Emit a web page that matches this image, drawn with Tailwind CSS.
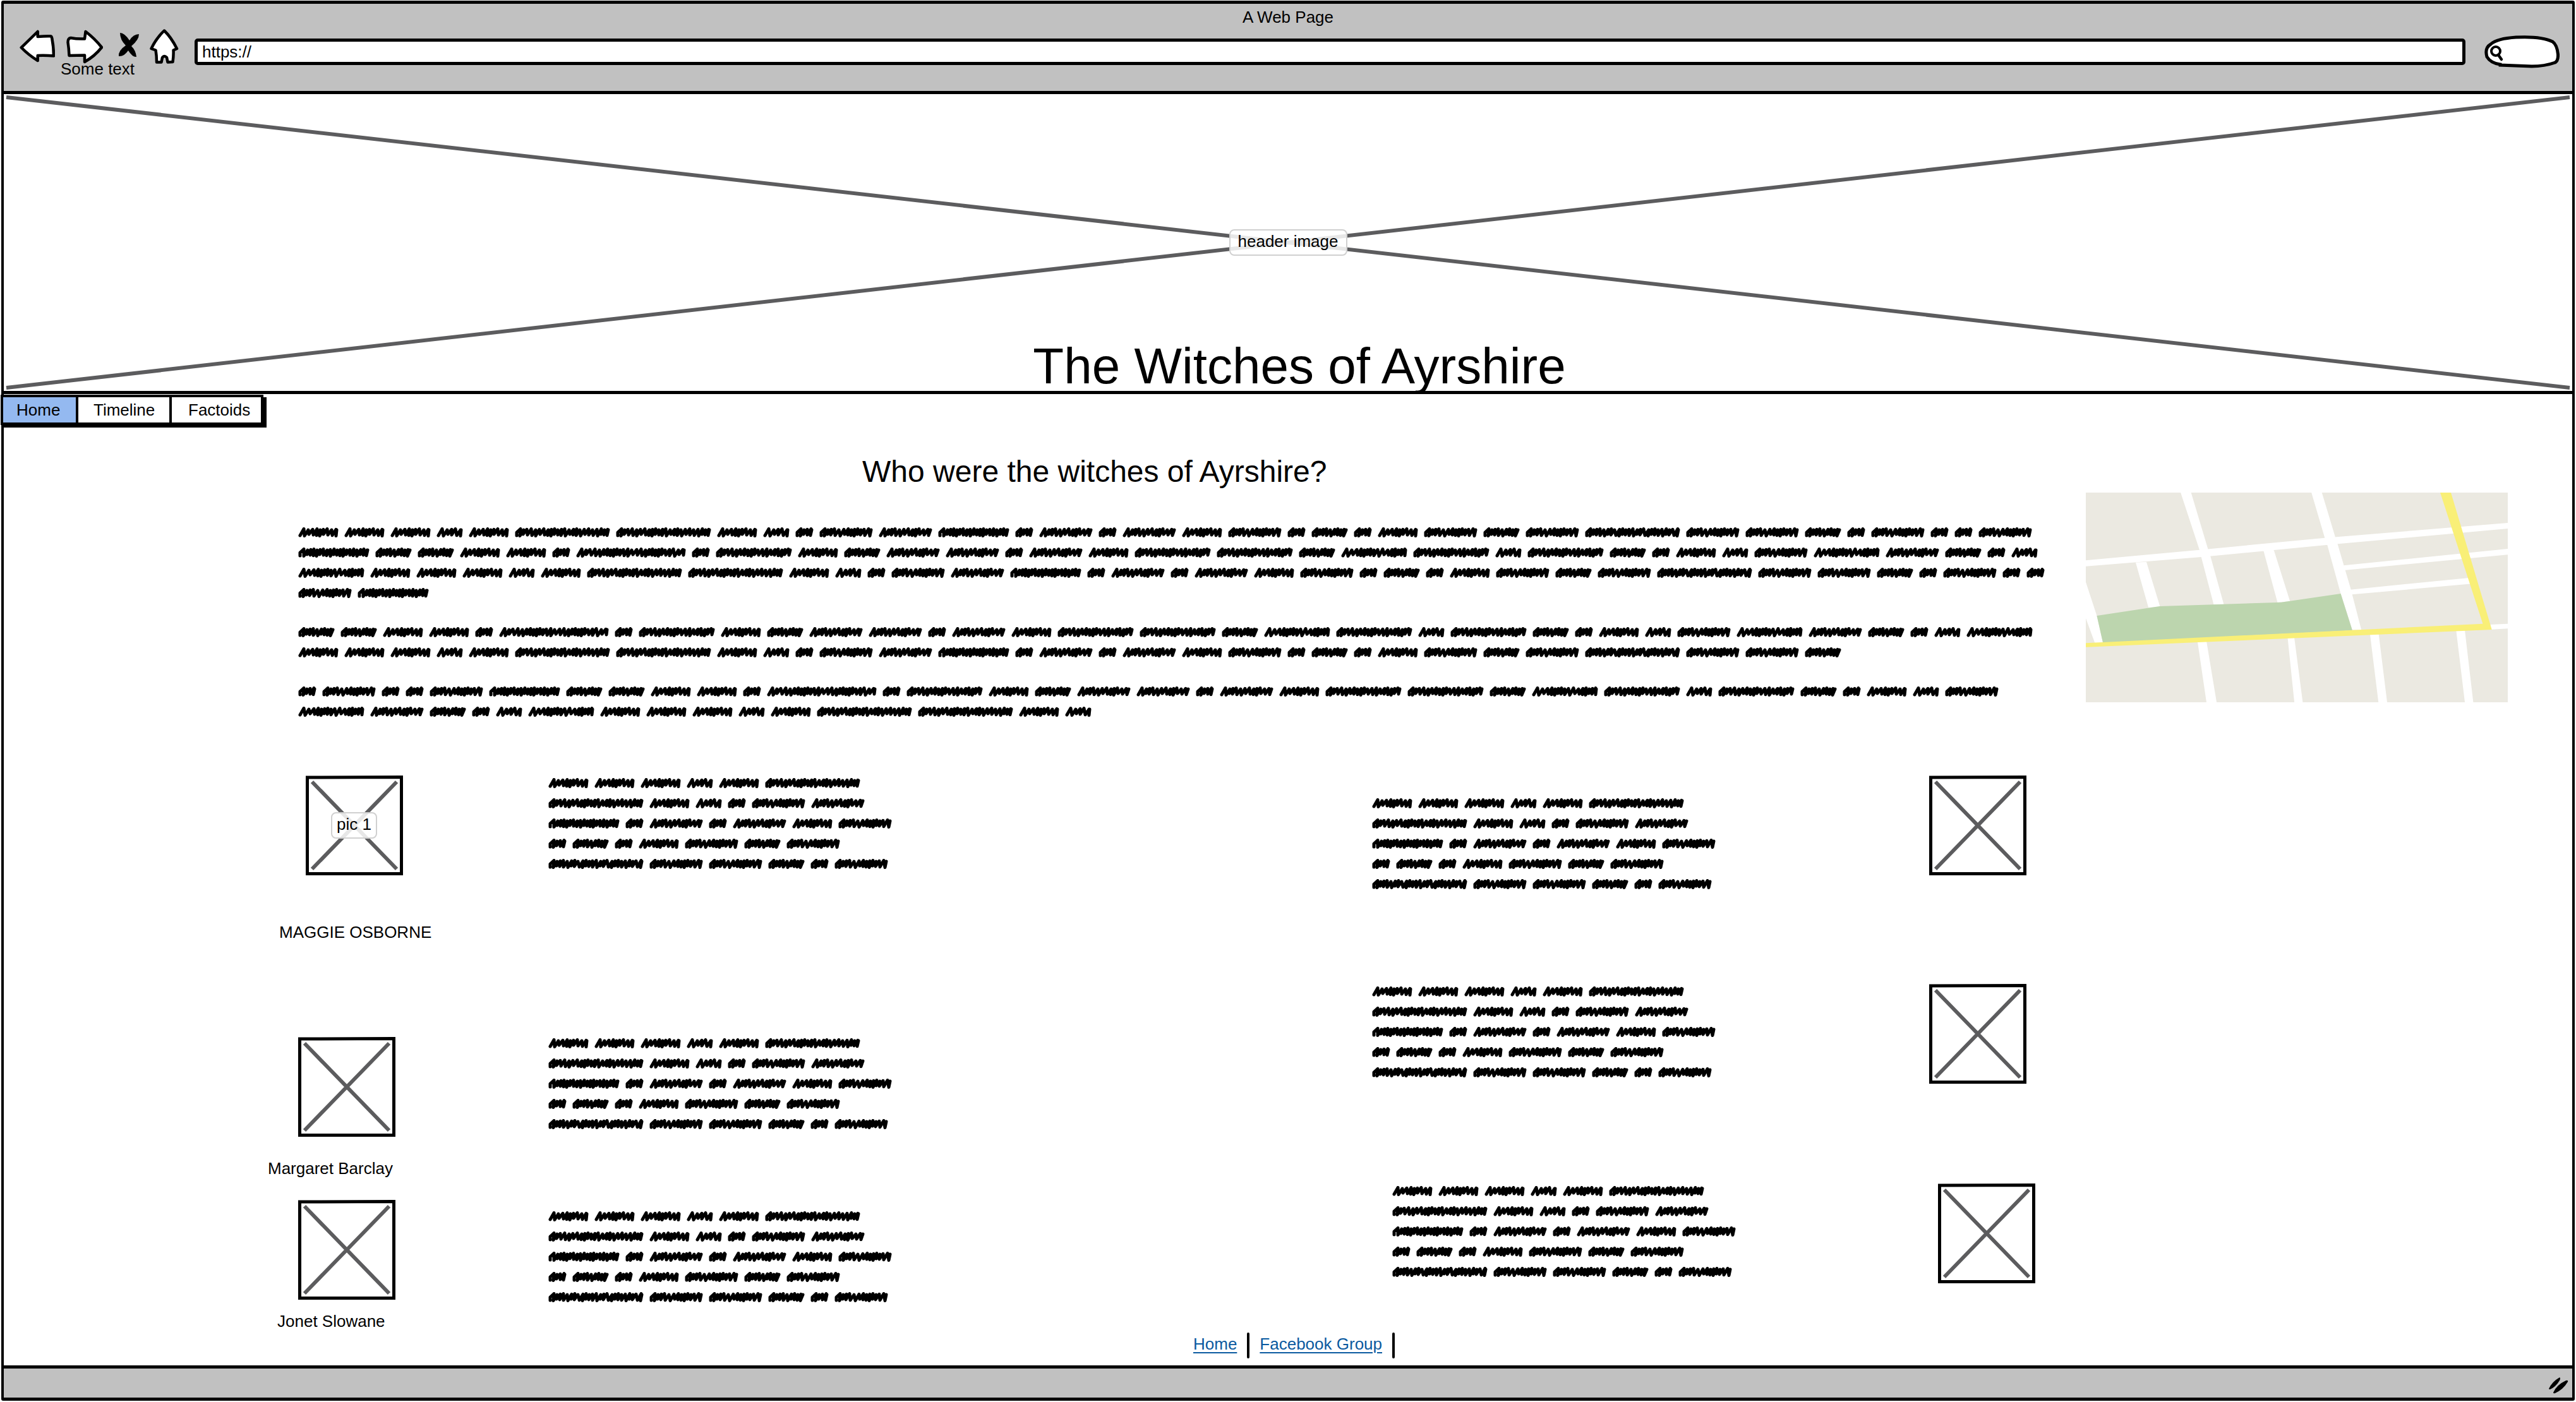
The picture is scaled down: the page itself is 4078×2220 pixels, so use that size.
<!DOCTYPE html>
<html lang="en">
<head>
<meta charset="utf-8">
<title>The Witches of Ayrshire</title>
<script src="https://cdn.jsdelivr.net/npm/@tailwindcss/browser@4"></script>
</head>
<body class="bg-white text-black font-['Liberation_Sans',Arial,sans-serif] text-[26px] leading-8">
<div class="flex flex-col min-h-screen pt-px px-[2px] pb-[2px]">
<div class="flex flex-col grow border-x-4 border-y-[5px] border-black rounded-[3px]">

  <!-- Browser chrome -->
  <header class="h-[143px] bg-[#c1c1c1] border-b-[5px] border-black pt-[5px] pl-[25px] pr-5">
    <div class="text-center -ml-[5px]">A Web Page</div>
    <div class="relative flex items-start mt-[3px]">
      <button aria-label="Back" class="mr-[18px] shrink-0"><svg class="block w-14 h-14" viewBox="31 46 56 56" fill="#fff" stroke="#000" stroke-width="4.5" stroke-linejoin="round"><path d="M33.7 75.3L59.7 50V58Q72 57 80 57.300Q82 57.500 82.500 62Q85 75 85 88.500Q72 87.500 59.700 88V96Q45 87 33.700 75.300Z"/></svg></button>
      <button aria-label="Forward" class="mr-6 shrink-0"><svg class="block w-[58px] h-14" viewBox="105 46 58 56" fill="#fff" stroke="#000" stroke-width="4.5" stroke-linejoin="round"><path d="M109.500 88Q109 76 107.500 67Q107.500 60.500 112 60Q122 62 134 61.500L135.500 50Q150 61 161 75Q150 89 134 98V87.500Q121 87.500 109.500 88Z"/></svg></button>
      <button aria-label="Stop" class="mr-4 shrink-0"><svg class="block w-[34px] h-14" viewBox="187 46 34 56"><path d="M190 52Q197 52 205 64Q211 54 220 54Q220 63 208 73Q215 80 216 90Q210 91 203 80Q196 90 188 89Q187 80 199 72Q190 63 190 52Z"/></svg></button>
      <button aria-label="Home page" class="mr-[25px] shrink-0"><svg class="block w-[46px] h-14" viewBox="237 46 46 56" fill="#fff" stroke="#000" stroke-width="4.500" stroke-linejoin="round"><path d="M260 48.500Q271 59 280 77L274.500 79.500Q275 88 273.500 98L265.500 98.500L264 91Q260 87 257 91L255.500 98.500L248 98.500Q248 88 246.500 79.500L239.500 77Q247 61 260 48.500Z"/></svg></button>
      <input aria-label="Address" type="text" value="https://" class="block grow min-w-0 h-[42px] mt-[15px] mr-[30px] pl-[7px] bg-white border-[5px] border-black rounded-[5px]">
      <label class="relative block shrink-0 w-[119px] h-[52px] mt-[10px]">
        <svg class="absolute inset-0 w-[119px] h-[52px]" viewBox="0 0 119 52" fill="#fff" stroke="#000" stroke-width="5"><path d="M25 46Q10 44 4 34Q0 20 10 14Q20 5 50 3Q90 1 108 10Q115 15 116.500 30Q117 40 112 43Q95 49 75 49Q50 48 25 47Z"/><circle cx="18" cy="25" r="7" stroke-width="4"/><path d="M22 31L27 38" stroke-linecap="round" stroke-width="4.500"/></svg>
        <input aria-label="Search" type="text" class="relative block w-full h-full pl-9 pr-4 bg-transparent">
      </label>
      <span class="absolute left-[65px] top-[47px]">Some text</span>
    </div>
  </header>

  <!-- Header image -->
  <div class="relative h-[475px] border-b-[5px] border-black overflow-hidden flex flex-col justify-end">
    <svg class="absolute inset-0 w-full h-full" viewBox="0 0 4066 470" preserveAspectRatio="none" stroke="#5c5c5e" stroke-width="6"><path d="M4 5L4062 465M4 465L4062 5"/></svg>
    <div class="absolute inset-x-0 top-[214px] flex justify-center"><span class="px-3 h-[42px] pt-px text-center bg-white/85 border-2 border-[#d0d0d0] rounded-lg">header image</span></div>
    <h1 class="relative text-center text-[80px] leading-[88px] -mb-[5px] pl-[36px]">The Witches of Ayrshire</h1>
  </div>

  <nav class="relative flex self-start mt-px -ml-[5px] h-12 border-4 border-black shadow-[5px_4px_0_#000] leading-10 bg-white">
    <a href="#home" class="bg-[#94b9f0] w-[115px] pl-[21px]">Home</a>
    <a href="#timeline" class="w-[148px] pl-6 border-l-4 border-black">Timeline</a>
    <a href="#factoids" class="w-[145px] pl-[26px] border-l-4 border-black">Factoids</a>
  </nav>

  <main class="grow pl-[418px]">
    <div class="flex">
      <article class="grow min-w-0 pl-12 pt-[46px]">
        <h2 class="pl-[893px] text-[48px] leading-[56px] mb-[52px]">Who were the witches of Ayrshire?</h2>
        <div data-rows="AAABACCABDEFGDFDFAEDHDAEHEMEEHDEDDE GHHAADIDJAHFFDFAJJHKJBJHDABEKFHDB KAAABACCABDEFGDFDFAEDHDAEHEMEEHDEDD EG" class="mb-[30px]"></div>
        <div data-rows="HHAADIDJAHFFDFAJJHKJBJHDABEKFHDBK AAABACCABDEFGDFDFAEDHDAEHEMEEH" class="mb-[30px]"></div>
        <div data-rows="DEDDEGHHAADIDJAHFFDFAJJHKJBJHDABE KFHDBKAAABACCAB"></div>
      </article>
      <aside class="shrink-0 mt-[107px] mr-[102px]">
        <svg class="block w-[668px] h-[332px]" viewBox="48 60 1455 996" preserveAspectRatio="none" role="img" aria-label="Map">
          <path fill="#ebe9e1" d="M48 60H1503V1056H48Z"/>
          <path fill="#fff" d="M375 60H411L469 327L476 354L524 592H489L446 366L440 332ZM826 60H862L908 271L916 304L962 520L998 712H967L927 540L880 305L872 275ZM48 382L440 332L872 275L1503 204V231L916 304L446 366L48 410ZM220 392L257 389L304 602L264 606ZM660 332L695 327L752 576L709 582ZM938 406L1503 327V355L938 429ZM960 521L1375 464L1380 493L966 544ZM48 485L86 645L107 773H79L48 657ZM433 765H464L499 1056H464ZM744 750H767L796 1056H767ZM1028 733H1058L1087 1056H1057ZM1325 715H1355L1384 1056H1355ZM1443 687L1503 683V706L1446 710Z"/>
          <path fill="#bcd5ae" d="M86 645L302 600L722 581L927 540L967 715L107 773Z"/>
          <path fill="#f9ef77" d="M48 775L1417 683L1270 60H1307L1448 711L48 794Z"/>
        </svg>
      </aside>
    </div>

    <div class="grid grid-cols-[1748fr_1900fr] pt-[81px]">
      <div>
        <section class="flex items-start mb-36">
          <figure class="w-[444px] mt-1">
            <div class="relative ml-[60px] w-[154px] h-[158px]"><svg class="block w-[154px] h-[158px]"><use href="#pic"/></svg><span class="absolute left-[40px] top-[58px] w-[73px] h-[42px] pt-px text-center bg-white/85 border-2 border-[#d0d0d0] rounded-lg">pic 1</span></div>
            <figcaption class="mt-[74px] ml-[18px]">MAGGIE OSBORNE</figcaption>
          </figure>
          <div data-rows="AAABAC CABDEF GDFDFAE DHDAEHE MEEHDE"></div>
        </section>
        <section class="flex items-start mb-[34px]">
          <figure class="w-[444px] mt-[6px]">
            <svg class="block ml-12 w-[154px] h-[158px]"><use href="#pic"/></svg>
            <figcaption class="mt-[34px]">Margaret Barclay</figcaption>
          </figure>
          <div data-rows="AAABAC CABDEF GDFDFAE DHDAEHE MEEHDE"></div>
        </section>
        <section class="flex items-start">
          <figure class="w-[444px]">
            <svg class="block ml-12 w-[154px] h-[158px]"><use href="#pic"/></svg>
            <figcaption class="mt-[18px] ml-[15px]">Jonet Slowane</figcaption>
          </figure>
          <div data-rows="AAABAC CABDEF GDFDFAE DHDAEHE MEEHDE" class="mt-[10px]"></div>
        </section>
      </div>
      <div>
        <section class="flex items-start mt-1">
          <div data-rows="AAABAC CABDEF GDFDFAE DHDAEHE MEEHDE" class="w-[882px] mt-7"></div>
          <svg class="block w-[154px] h-[158px]"><use href="#pic"/></svg>
        </section>
        <section class="flex items-start mt-[138px]">
          <div data-rows="AAABAC CABDEF GDFDFAE DHDAEHE MEEHDE" class="w-[882px]"></div>
          <svg class="block w-[154px] h-[158px] mt-1"><use href="#pic"/></svg>
        </section>
        <section class="flex items-start mt-[154px] pl-8">
          <div data-rows="AAABAC CABDEF GDFDFAE DHDAEHE MEEHDE" class="w-[864px]"></div>
          <svg class="block w-[154px] h-[158px] mt-1"><use href="#pic"/></svg>
        </section>
      </div>
    </div>
  </main>

  <div class="flex justify-center gap-4 pl-[19px] mt-[2px] mb-[11px] text-[#0a5aa0]">
    <a href="#home" class="underline decoration-2 underline-offset-4 pt-[2px]">Home</a>
    <span class="w-1 h-[41px] rounded bg-black"></span>
    <a href="#facebook" class="underline decoration-2 underline-offset-4 pt-[2px]">Facebook Group</a>
    <span class="w-1 h-[41px] rounded bg-black"></span>
  </div>

  <footer class="relative h-[51px] border-t-[5px] border-black bg-[#c1c1c1]">
    <svg class="absolute right-[4px] bottom-[4px] w-[34px] h-[30px]" viewBox="0 0 34 30"><path d="M1 20Q6 9 18 2Q20 3 18 7Q12 17 3 21Q1 21 1 20ZM8 26Q13 14 28 7Q32 6 31 9Q24 21 11 27Q8 28 8 26Z"/></svg>
  </footer>
</div>
</div>

<svg class="absolute w-0 h-0" aria-hidden="true">
  <defs>
    <symbol id="pic" viewBox="0 0 154 158" width="154" height="158">
      <path d="M2.500 3L151.500 2.500V155.500H2.500Z" fill="#fff" stroke="#000" stroke-width="5"/>
      <path d="M10 10L144 148M10 148L144 10" stroke="#5c5c5e" stroke-width="6"/>
    </symbol>
  </defs>
</svg>
<script>
  // Scribbled placeholder words: width, and the gaps between pen strokes (repeated) for each kind of word
  const words = {
    A: [64, [7, 7, 7, 5, 5, 6]], B: [42, [8, 7, 6, 8]], C: [151, [5, 5, 7, 7, 6, 7, 7, 5, 5, 5, 6, 5, 7, 7]],
    D: [29, [5, 5, 6]], E: [85, [5, 5, 5, 7, 8, 7, 5, 5]], F: [85, [7, 5, 5, 7, 7, 7]],
    G: [113, [6, 5, 5, 5, 5, 5, 6, 5]], H: [58, [5, 5, 5, 6, 7, 5]], I: [174, [7, 6, 8, 7, 7, 6, 5, 5, 5, 5, 5]],
    J: [121, [5, 5, 7, 7, 6, 7, 5, 6]], K: [105, [8, 8, 7, 5, 5, 5, 5, 6]], M: [151, [5, 5, 5, 6, 7, 5, 5, 8]]
  };
  const draw = ([w, gaps]) => {
    let d = gaps[0] < 7 ? 'M3 13L3 8' : 'M3 13', x = 3;
    for (let i = 0; x < w - 7; i++) {
      const g = gaps[i % gaps.length], top = Math.min(x + 6, w - 3);
      x = Math.min(x + g, w - 4);
      d += `L${top} ${2.5 + (i * 2 % 3) * 0.8}L${x} ${13.5 - (i * 3 % 4) * 0.8}`;
    }
    return `<svg class="block shrink-0 h-4" width="${w}" viewBox="0 0 ${w} 16" fill="none" stroke="#000" stroke-width="5" stroke-linecap="round" stroke-linejoin="round"><path d="${d}L${w - 3} 4"/></svg>`;
  };
  document.querySelectorAll('[data-rows]').forEach(el => {
    el.innerHTML = el.dataset.rows.split(' ').map(r =>
      `<div class="flex items-center gap-[9px] h-8">${[...r].map(c => draw(words[c])).join('')}</div>`).join('');
  });
</script>
</body>
</html>
